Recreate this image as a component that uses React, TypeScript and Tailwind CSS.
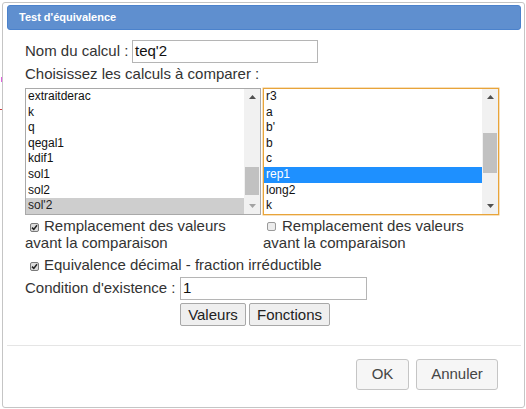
import type { ReactNode } from "react"

const font = { fontFamily: '"Liberation Sans", Arial, sans-serif' }

const leftItems = ["extraitderac", "k", "q", "qegal1", "kdif1", "sol1", "sol2", "sol'2"]
const rightItems = ["r3", "a", "b'", "b", "c", "rep1", "long2", "k"]

function Arrow({ up, dim }: { up?: boolean; dim?: boolean }) {
  return (
    <div className="h-[16px] flex items-center justify-center">
      <svg width="7" height="4" viewBox="0 0 7 4">
        <path d={up ? "M0 4 L3.5 0 L7 4 Z" : "M0 0 L3.5 4 L7 0 Z"} fill={dim ? "#a3a3a3" : "#505050"} />
      </svg>
    </div>
  )
}

function ListBox({
  items,
  selected,
  focused,
  thumbTop,
  thumbHeight,
}: {
  items: string[]
  selected: number
  focused?: boolean
  thumbTop: number
  thumbHeight: number
}) {
  return (
    <div
      className={`w-[236px] h-[127px] flex bg-white ${
        focused ? "border border-[#e8a43a] shadow-[0_0_0_0.5px_#f0c27a]" : "border border-[#a9a9a9]"
      }`}
    >
      <div className="flex-1 overflow-hidden">
        {items.map((it, i) => (
          <div
            key={it + i}
            className={`h-[15.6px] leading-[15.6px] pl-[2px] text-[12px] ${
              i === selected
                ? focused
                  ? "bg-[#1e90ff] text-white"
                  : "bg-[#cecece] text-[#222]"
                : "text-[#111]"
            }`}
          >
            {it}
          </div>
        ))}
      </div>
      <div className="w-[16px] bg-[#f1f1f1] flex flex-col">
        <Arrow up />
        <div className="flex-1 relative">
          <div
            className="absolute left-[1px] right-[1px] bg-[#c1c1c1]"
            style={{ top: thumbTop, height: thumbHeight }}
          />
        </div>
        <Arrow dim={!focused} />
      </div>
    </div>
  )
}

function Check({ checked }: { checked?: boolean }) {
  return (
    <span
      className={`inline-flex items-center justify-center w-[9px] h-[9px] rounded-[2px] border align-[0px] ${
        checked ? "border-[#7a7a7a] bg-[#dcdcdc]" : "border-[#9a9a9a] bg-[#ececec]"
      }`}
    >
      {checked && (
        <svg width="7" height="7" viewBox="0 0 7 7">
          <path d="M1 3.6 L2.8 5.4 L6 1.2" stroke="#222" strokeWidth="1.5" fill="none" />
        </svg>
      )}
    </span>
  )
}

function Btn({ children, w }: { children: ReactNode; w: string }) {
  return (
    <button
      className={`${w} h-[23px] bg-[#efefef] border border-[#a8a8a8] rounded-[2px] text-[15px] text-[#222] leading-none`}
    >
      {children}
    </button>
  )
}

export default function App() {
  return (
    <div className="relative w-[526px] h-[409px] bg-white pt-[2px] pl-[2px] overflow-hidden" style={font}>
      {/* marks from the page behind the dialog */}
      <span className="absolute left-[1px] top-[77px] w-[1px] h-[5px] bg-[#e060e0]" />
      <span className="absolute left-0 top-[109px] w-[2px] h-[1px] bg-[#d04040]" />

      <div className="w-[523px] h-[406px] border border-[#c5c5c5] rounded-[3px] bg-white pt-[2px] pl-[4px] pr-[3px] flex flex-col">
        <div className="h-[25px] bg-[#5f8fcf] border border-[#4b82cc] rounded-[3px] pl-[11px] flex items-center text-[11px] font-bold text-white">
          Test d'équivalence
        </div>

        <div className="pl-[18px] text-[15px] text-[#333]">
          <div className="mt-[10px] h-[23px] flex items-center">
            <span className="w-[107px] shrink-0">Nom du calcul :</span>
            <div className="w-[186px] h-[23px] border border-[#b5b5b5] pl-[2px] flex items-center text-[#111]">teq'2</div>
          </div>

          <div className="mt-[1px] h-[19px] leading-[19px]">Choisissez les calculs à comparer :</div>

          <div className="mt-[5px] flex gap-[2px]">
            <ListBox items={leftItems} selected={7} thumbTop={62} thumbHeight={28} />
            <ListBox items={rightItems} selected={5} focused thumbTop={28} thumbHeight={40} />
          </div>

          <div className="mt-[2px] grid grid-cols-[238px_1fr] leading-[17px]">
            <div>
              <span className="ml-[5px] mr-[5px]"><Check checked /></span>
              Remplacement des valeurs
              <br />
              avant la comparaison
            </div>
            <div>
              <span className="ml-[4px] mr-[6px]"><Check /></span>
              Remplacement des valeurs
              <br />
              avant la comparaison
            </div>
          </div>

          <div className="mt-[5px] leading-[17px]">
            <span className="ml-[5px] mr-[5px]"><Check checked /></span>
            Equivalence décimal - fraction irréductible
          </div>

          <div className="mt-[4px] h-[23px] flex items-center">
            <span className="w-[155px] shrink-0">Condition d'existence :</span>
            <div className="w-[187px] h-[23px] border border-[#b5b5b5] pl-[2px] flex items-center text-[#111]">1</div>
          </div>

          <div className="mt-[3px] pl-[155px] flex gap-[3px]">
            <Btn w="w-[66px]">Valeurs</Btn>
            <Btn w="w-[81px]">Fonctions</Btn>
          </div>
        </div>

        <div className="mt-[19px] border-t border-[#e5e5e5]" />

        <div className="mt-[13px] pr-[23px] flex justify-end gap-[7px]">
          <button className="w-[53px] h-[31px] bg-[#f6f6f6] border border-[#c5c5c5] rounded-[3px] text-[15px] text-[#454545]">
            OK
          </button>
          <button className="w-[82px] h-[31px] bg-[#f6f6f6] border border-[#c5c5c5] rounded-[3px] text-[15px] text-[#454545]">
            Annuler
          </button>
        </div>
      </div>
    </div>
  )
}
